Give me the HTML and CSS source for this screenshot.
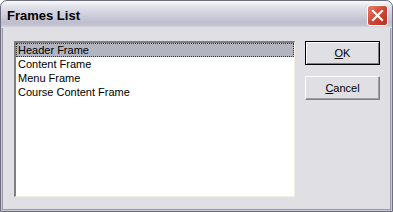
FILE: index.html
```html
<!DOCTYPE html>
<html lang="en">
<head>
    <meta charset="UTF-8">
    <title>Frames List</title>
    <link rel="stylesheet" href="styles.css">
</head>
<body>
    <div class="window">
        <div class="titlebar">
            <span class="title">Frames List</span>
            <button class="close-btn" aria-label="Close">
                <svg width="13" height="13" viewBox="0 0 13 13">
                    <path d="M2 2 L11 11 M11 2 L2 11" stroke="#fff" stroke-width="2.2" stroke-linecap="square"/>
                </svg>
            </button>
        </div>
        <div class="content">
            <ul class="frame-list">
                <li class="selected">Header Frame</li>
                <li>Content Frame</li>
                <li>Menu Frame</li>
                <li>Course Content Frame</li>
            </ul>
            <div class="buttons">
                <button class="btn default"><u>O</u>K</button>
                <button class="btn"><u>C</u>ancel</button>
            </div>
        </div>
    </div>
</body>
</html>
```

FILE: styles.css
```css
body {
    margin: 0;
    padding: 0;
    font-family: "Liberation Sans", Arial, sans-serif;
    font-size: 11px;
}
.window {
    box-sizing: border-box;
    width: 393px;
    height: 212px;
    background-color: #e0dfe3;
    border: 1px solid #6e6e80;
    border-radius: 7px 7px 0 0;
    box-shadow: inset 2px 0 0 #c8c8d4, inset -2px 0 0 #c8c8d4, inset 0 -2px 0 #c8c8d4;
    display: flex;
    flex-direction: column;
    overflow: hidden;
}
.titlebar {
    height: 27px;
    display: flex;
    align-items: center;
    justify-content: space-between;
    padding: 0 4px 0 6px;
    background: linear-gradient(#fbfbfd, #e4e4ec 18%, #cfcfdc 50%, #bdbdcd 80%, #c6c6d4 92%, #e6e6ec);
    border-radius: 6px 6px 0 0;
}
.title {
    font-weight: bold;
    font-size: 13px;
    color: #000;
    padding-top: 2px;
}
.close-btn {
    width: 21px;
    height: 21px;
    padding: 0;
    border: 1px solid #fff;
    border-radius: 3px;
    background: linear-gradient(135deg, #e8806e, #d24a36 45%, #b8301e);
    display: flex;
    align-items: center;
    justify-content: center;
    margin-top: 1px;
}
.content {
    flex: 1;
    display: flex;
    padding: 13px 8px 0 11px;
    gap: 10px;
    border-left: 1px solid #9a9aaa;
    border-right: 1px solid #9a9aaa;
    border-bottom: 1px solid #9a9aaa;
    margin: 0 1px 1px 1px;
}
.frame-list {
    list-style: none;
    margin: 0;
    padding: 0;
    width: 281px;
    height: 156px;
    box-sizing: border-box;
    background: #fff;
    border-top: 2px solid #7f7f7f;
    border-left: 2px solid #7f7f7f;
    border-right: 1px solid #f1efe2;
    border-bottom: 1px solid #f1efe2;
    box-shadow: inset -1px -1px 0 #fff;
}
.frame-list li {
    box-sizing: border-box;
    height: 14px;
    line-height: 13px;
    padding: 0 1px;
    color: #000;
    white-space: nowrap;
    border: 1px solid transparent;
}
.frame-list li.selected {
    background: #b2b4bf;
    border: 1px dotted #333;
}
.buttons {
    display: flex;
    flex-direction: column;
    gap: 11px;
}
.btn {
    width: 75px;
    height: 24px;
    box-sizing: border-box;
    font-family: "Liberation Sans", Arial, sans-serif;
    font-size: 11px;
    color: #000;
    background: #e0dfe3;
    border: 1px solid;
    border-color: #fff #7f7f7f #7f7f7f #fff;
    box-shadow: inset -1px -1px 0 #a0a0a0;
    padding: 0;
}
.btn.default {
    border: 1px solid #000;
    box-shadow: inset 1px 1px 0 #fff, inset -1px -1px 0 #7f7f7f;
}
.btn u {
    text-decoration: underline;
}
```
